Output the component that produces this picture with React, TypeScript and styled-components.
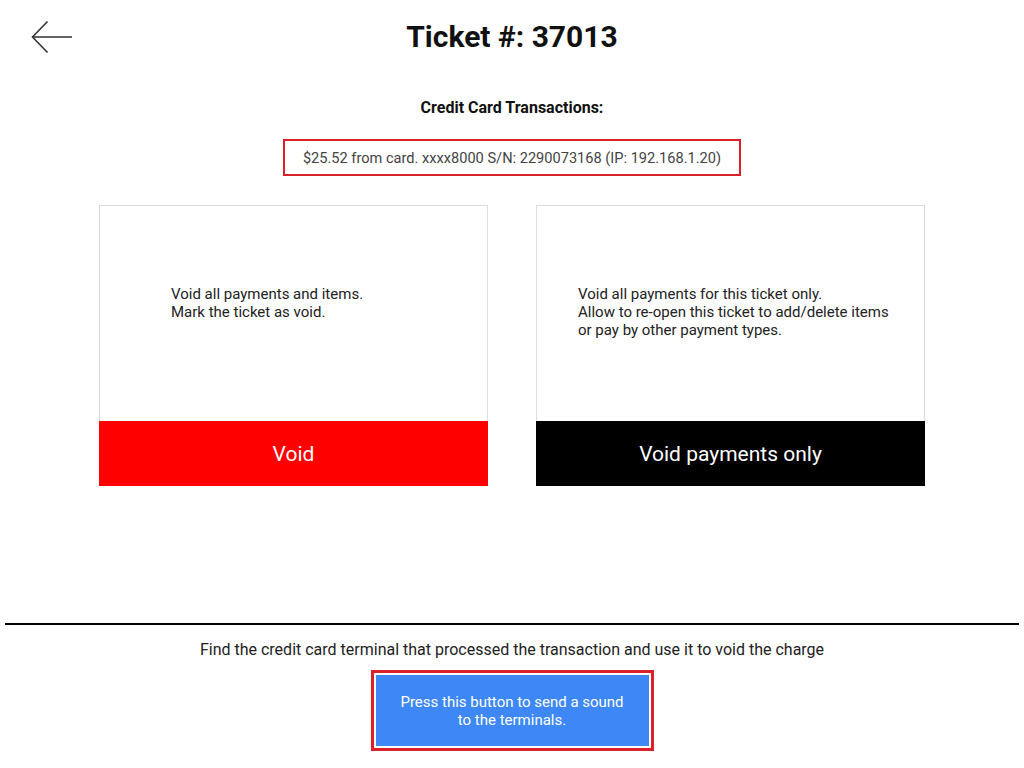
import React from "react";
import styled, { createGlobalStyle } from "styled-components";

const Global = createGlobalStyle`
  html, body { margin: 0; padding: 0; background: #fff; }
  body { font-family: Roboto, "Liberation Sans", Arial, sans-serif; color: #222; }
  * { box-sizing: border-box; }
`;

const Page = styled.div`
  width: 1024px;
  height: 768px;
  display: flex;
  flex-direction: column;
  align-items: center;
  overflow: hidden;
`;

const Header = styled.header`
  width: 100%;
  display: grid;
  grid-template-columns: 1fr auto 1fr;
  align-items: center;
  padding-top: 19px;
`;

const BackButton = styled.button`
  justify-self: start;
  margin-left: 31px;
  width: 44px;
  height: 36px;
  padding: 0;
  border: 0;
  background: transparent;
  display: flex;
  align-items: center;
  cursor: pointer;
`;

const Title = styled.h1`
  margin: 0;
  font-size: 30px;
  line-height: 36px;
  font-weight: 700;
  color: #111;
`;

const SubTitle = styled.h2`
  margin: 43px 0 0;
  font-size: 16px;
  line-height: 20px;
  font-weight: 700;
  color: #111;
`;

const TransactionBox = styled.div`
  margin-top: 21px;
  border: 2px solid #d9202b;
  padding: 0 18px;
  height: 37px;
  display: flex;
  align-items: center;
  font-size: 14.6px;
  color: #444;
`;

const CardRow = styled.div`
  margin-top: 29px;
  display: flex;
  gap: 48px;
`;

const Card = styled.div`
  width: 389px;
  height: 281px;
  border: 1px solid #dcdcdc;
  display: flex;
  flex-direction: column;
`;

const CardText = styled.div<{ $indent: number }>`
  flex: 1;
  padding: 79px 0 0 ${(p) => p.$indent}px;
  font-size: 15px;
  line-height: 18px;
  color: #222;
`;

const ActionButton = styled.button<{ $bg: string }>`
  height: 65px;
  margin: 0 -1px -1px;
  border: 0;
  background: ${(p) => p.$bg};
  color: #fff;
  font-family: inherit;
  font-size: 21px;
  cursor: pointer;
`;

const Footer = styled.footer`
  margin-top: auto;
  width: 100%;
  display: flex;
  flex-direction: column;
  align-items: center;
  padding-bottom: 17px;
`;

const Divider = styled.hr`
  width: 1014px;
  margin: 0;
  border: 0;
  border-top: 2px solid #000;
`;

const Hint = styled.p`
  margin: 15px 0 0;
  font-size: 16px;
  line-height: 20px;
  color: #222;
`;

const SoundFrame = styled.div`
  margin-top: 10px;
  border: 3px solid #d9202b;
  padding: 2px;
`;

const SoundButton = styled.button`
  display: block;
  width: 273px;
  height: 71px;
  border: 0;
  background: #3d88f6;
  color: #fff;
  font-family: inherit;
  font-size: 15px;
  line-height: 18px;
  cursor: pointer;
`;

export default function App() {
  return (
    <>
      <Global />
      <Page>
        <Header>
          <BackButton aria-label="Back">
            <svg width="42" height="34" viewBox="0 0 42 34" fill="none" stroke="#333" strokeWidth="1.6">
              <path d="M41 17H1.5M16.5 1.5L1.5 17l15 15.5" />
            </svg>
          </BackButton>
          <Title>Ticket #: 37013</Title>
          <span />
        </Header>
        <SubTitle>Credit Card Transactions:</SubTitle>
        <TransactionBox>$25.52 from card. xxxx8000 S/N: 2290073168 (IP: 192.168.1.20)</TransactionBox>
        <CardRow>
          <Card>
            <CardText $indent={71}>
              Void all payments and items.
              <br />
              Mark the ticket as void.
            </CardText>
            <ActionButton $bg="#ff0000">Void</ActionButton>
          </Card>
          <Card>
            <CardText $indent={41}>
              Void all payments for this ticket only.
              <br />
              Allow to re-open this ticket to add/delete items
              <br />
              or pay by other payment types.
            </CardText>
            <ActionButton $bg="#000000">Void payments only</ActionButton>
          </Card>
        </CardRow>
        <Footer>
          <Divider />
          <Hint>Find the credit card terminal that processed the transaction and use it to void the charge</Hint>
          <SoundFrame>
            <SoundButton>
              Press this button to send a sound
              <br />
              to the terminals.
            </SoundButton>
          </SoundFrame>
        </Footer>
      </Page>
    </>
  );
}
